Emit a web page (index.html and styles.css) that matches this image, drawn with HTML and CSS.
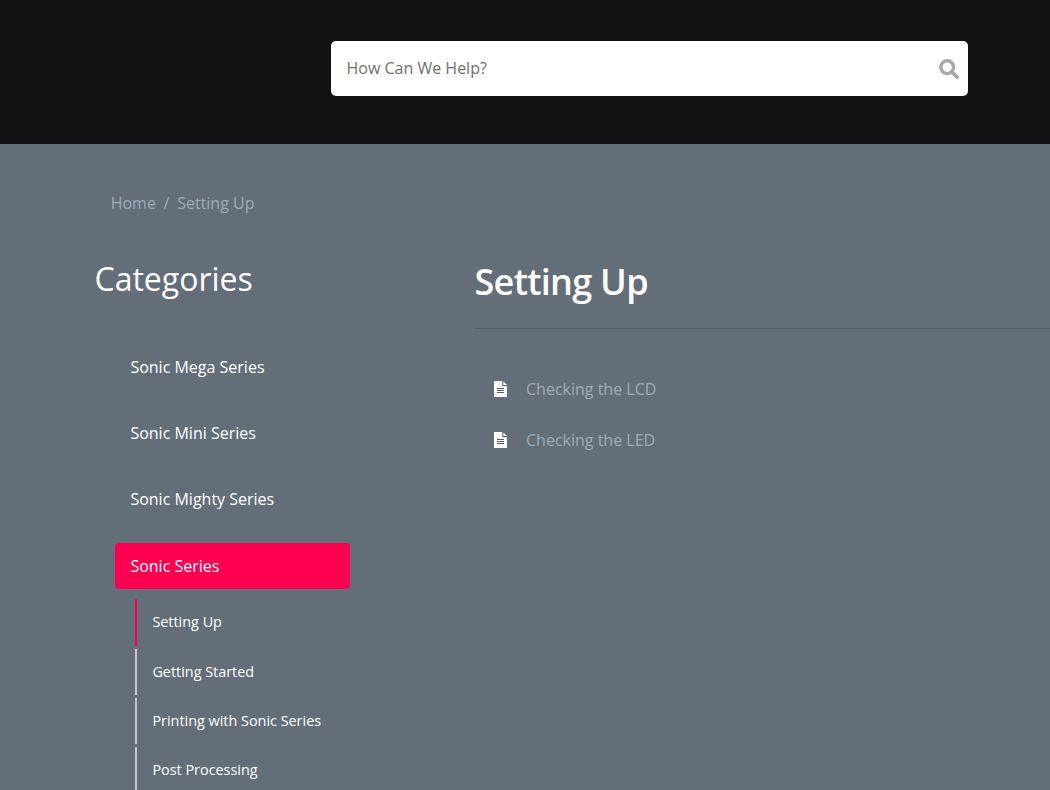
FILE: index.html
```html
<!DOCTYPE html>
<html lang="en">
<head>
<meta charset="utf-8">
<title>Setting Up</title>
<link rel="stylesheet" href="styles.css">
</head>
<body>
<header class="hero">
  <form class="search">
    <span class="search-text">How Can We Help?</span>
    <svg class="search-icon" viewBox="0 0 20 20" width="20" height="20" aria-hidden="true">
      <circle cx="8.2" cy="8.2" r="6.4" fill="none" stroke="#a8a8a8" stroke-width="3.4"/>
      <path d="M13 13 L18 18" stroke="#a8a8a8" stroke-width="3.8" stroke-linecap="round"/>
    </svg>
  </form>
</header>
<main class="content">
  <nav class="crumbs"><span>Home</span><span class="sep">/</span><span>Setting Up</span></nav>
  <div class="columns">
    <aside class="sidebar">
      <h2 class="side-title">Categories</h2>
      <ul class="cats">
        <li class="cat">Sonic Mega Series</li>
        <li class="cat">Sonic Mini Series</li>
        <li class="cat">Sonic Mighty Series</li>
        <li class="cat cat-active">Sonic Series</li>
      </ul>
      <ul class="subs">
        <li class="sub sub-active">Setting Up</li>
        <li class="sub">Getting Started</li>
        <li class="sub">Printing with Sonic Series</li>
        <li class="sub">Post Processing</li>
      </ul>
    </aside>
    <section class="article">
      <h1 class="title">Setting Up</h1>
      <ul class="docs">
        <li class="doc">
          <svg class="doc-icon" viewBox="0 0 13 16" width="13" height="16" aria-hidden="true">
            <path d="M0 0H8.2V5.2H13V16H0Z" fill="#fff"/>
            <path d="M9.4 0.4L13 4H9.4Z" fill="#fff"/>
            <path d="M3 7.5H10M3 9.5H10M3 11.5H10" stroke="#555d66" stroke-width="1"/>
          </svg>
          <span>Checking the LCD</span>
        </li>
        <li class="doc">
          <svg class="doc-icon" viewBox="0 0 13 16" width="13" height="16" aria-hidden="true">
            <path d="M0 0H8.2V5.2H13V16H0Z" fill="#fff"/>
            <path d="M9.4 0.4L13 4H9.4Z" fill="#fff"/>
            <path d="M3 7.5H10M3 9.5H10M3 11.5H10" stroke="#555d66" stroke-width="1"/>
          </svg>
          <span>Checking the LED</span>
        </li>
      </ul>
    </section>
  </div>
</main>
</body>
</html>
```
FILE: styles.css
```css
* { box-sizing: border-box; }
html, body { margin: 0; height: 790px; overflow: hidden; }
body { background: #636e79; font-family: "Open Sans", "Liberation Sans", sans-serif; color: #fff; }
ul { list-style: none; margin: 0; padding: 0; }
h1, h2 { margin: 0; }

.hero { height: 144px; background: #101214; padding: 41px 82px 0 331px; }
.search { height: 55px; background: #fff; border-radius: 5px; display: flex; align-items: center; justify-content: space-between; padding: 0 9.5px 0 15.5px; margin: 0; }
.search-text { font-size: 16px; color: #70706f; margin-top: -2px; }
.search-icon { display: block; margin-top: 1px; }

.content { padding: 48px 0 0 95px; }
.crumbs { display: flex; gap: 7.7px; padding-left: 15.7px; height: 22px; line-height: 22px; font-size: 16px; color: #9dacb8; }

.columns { display: flex; }
.sidebar { width: 380px; flex: none; padding-top: 45px; }
.side-title { font-size: 32px; font-weight: 400; line-height: 40px; margin-left: -0.5px; }
.cats { margin-top: 45px; padding-left: 20px; }
.cat { width: 235px; height: 46px; margin-bottom: 20px; padding-left: 15.4px; font-size: 16px; font-weight: 500; line-height: 46px; border-radius: 4px; }
.cat-active { background: #ff0050; margin-bottom: 10px; margin-top: 21px; }
.subs { padding-left: 40px; }
.sub { height: 46px; margin-bottom: 3px; padding-left: 15.4px; border-left: 2px solid #c9c9c9; font-size: 14.4px; font-weight: 500; line-height: 46px; }
.sub-active { border-left-color: #ff0050; height: 47px; margin-bottom: 3px; }

.article { flex: 1; padding-top: 45px; margin-right: -1px; }
.title { font-size: 36px; font-weight: 600; letter-spacing: -0.7px; line-height: 46px; height: 70px; border-bottom: 1px solid #576170; margin-left: -0.5px; }
.docs { padding: 34px 0 0 19px; }
.doc { display: flex; align-items: center; gap: 19px; height: 51px; font-size: 16px; color: #9dacb8; }
.doc-icon { display: block; flex: none; }
```
